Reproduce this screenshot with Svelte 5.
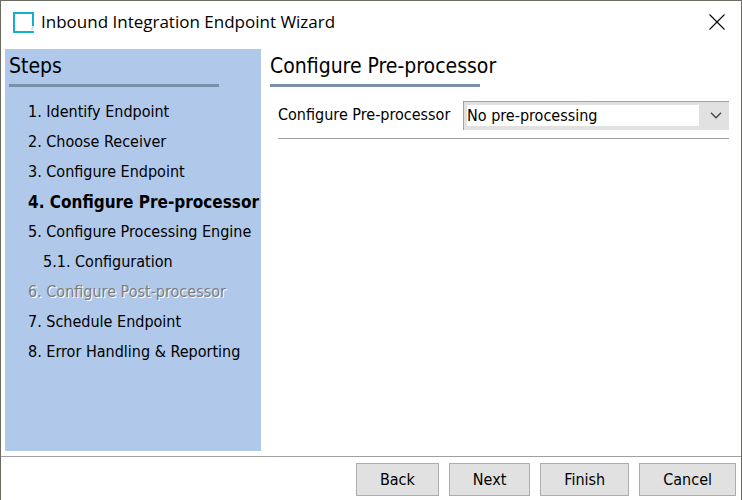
<script>
  const steps = [
    { label: '1. Identify Endpoint' },
    { label: '2. Choose Receiver' },
    { label: '3. Configure Endpoint' },
    { label: '4. Configure Pre-processor', current: true },
    { label: '5. Configure Processing Engine' },
    { label: '5.1. Configuration', sub: true },
    { label: '6. Configure Post-processor', disabled: true },
    { label: '7. Schedule Endpoint' },
    { label: '8. Error Handling & Reporting' }
  ];

  let processor = $state('none');
</script>

<main class="window">
  <header class="titlebar">
    <svg class="logo" width="21" height="21" viewBox="0 0 21 21" aria-hidden="true">
      <path d="M20 14V1H1v19h20" fill="none" stroke="#12b0cb" stroke-width="2" />
      <path d="M18 17h2M19 15h2" stroke="#7fd3e0" />
    </svg>
    <span class="title">Inbound Integration Endpoint Wizard</span>
    <button class="close" type="button" aria-label="Close">
      <svg width="16" height="16" viewBox="0 0 16 16" aria-hidden="true">
        <path d="M.5.5l15 15M15.500.5l-15 15" stroke="#000" stroke-width="1.100" />
      </svg>
    </button>
  </header>

  <div class="content">
    <nav class="steps">
      <h2>Steps</h2>
      <ol>
        {#each steps as step}
          <li
            class:current={step.current}
            class:sub={step.sub}
            class:disabled={step.disabled}
            aria-current={step.current ? 'step' : undefined}
          >{step.label}</li>
        {/each}
      </ol>
    </nav>

    <section class="panel">
      <h2>Configure Pre-processor</h2>
      <div class="field">
        <label for="processor">Configure Pre-processor</label>
        <div class="combo">
          <select id="processor" bind:value={processor}>
            <option value="none">No pre-processing</option>
          </select>
          <svg width="12" height="7" viewBox="0 0 12 7" aria-hidden="true">
            <path d="M1 .8l5 5 5-5" fill="none" stroke="#444" stroke-width="1.300" />
          </svg>
        </div>
      </div>
    </section>
  </div>

  <footer class="actions">
    <button type="button">Back</button>
    <button type="button">Next</button>
    <button type="button">Finish</button>
    <button type="button">Cancel</button>
  </footer>
</main>

<style>
  :global(body) {
    margin: 0;
    background: #fff;
  }

  .window {
    box-sizing: border-box;
    display: flex;
    flex-direction: column;
    min-height: 100vh;
    border: 1px solid #6c6b62;
    border-bottom: 0;
    background: #fff;
    color: #000;
    font: 16px/30px Tahoma, "DejaVu Sans Condensed", sans-serif;
  }

  .titlebar {
    display: flex;
    align-items: center;
    height: 42px;
    padding: 0 16px 6px 12px;
  }

  .title {
    flex: 1;
    margin-left: 7px;
    font: 17px/30px "Open Sans", sans-serif;
  }

  .close {
    display: flex;
    padding: 0;
    border: 0;
    background: none;
  }

  .content {
    flex: 1;
    display: flex;
    gap: 9px;
    padding: 0 12px 5px 4px;
  }

  h2 {
    box-sizing: border-box;
    width: 210px;
    margin: 0;
    border-bottom: 3px solid #7a90aa;
    font-size: 21px;
    font-weight: normal;
    line-height: 35px;
    white-space: nowrap;
  }

  .steps {
    box-sizing: border-box;
    width: 256px;
    padding-left: 4px;
    background: #b0c8ea;
  }

  ol {
    margin: 10px 0 0;
    padding-left: 19px;
    list-style: none;
    white-space: nowrap;
  }

  .current {
    font-size: 17px;
    font-weight: bold;
  }

  .sub {
    padding-left: 15px;
  }

  .disabled {
    color: #7d7d7d;
    text-shadow: 1px 1px #fff;
  }

  .panel {
    flex: 1;
  }

  .field {
    display: flex;
    align-items: center;
    gap: 8px;
    margin: 13px 0 0 8px;
    padding-bottom: 8px;
    border-bottom: 1px solid #a0a0a0;
  }

  label {
    min-width: 177px;
  }

  .combo {
    position: relative;
    flex: 1;
  }

  /* white text area on a grey box, the arrow sits in the grey part */
  select {
    appearance: none;
    display: block;
    width: 100%;
    height: 29px;
    padding: 0 34px 0 3px;
    border: 0 solid #a0a0a0;
    border-width: 1px 0 0 1px;
    border-radius: 0;
    background: linear-gradient(#fff, #fff) 3px 3px / calc(100% - 33px) 21px no-repeat #e1e1e1;
    color: #000;
    font: inherit;
    line-height: 28px;
  }

  .combo svg {
    position: absolute;
    top: 11px;
    right: 7px;
    pointer-events: none;
  }

  .actions {
    display: flex;
    justify-content: flex-end;
    gap: 10px;
    padding: 6px 5px 4px;
    border-top: 1px solid #a0a0a0;
  }

  .actions button {
    min-width: 81px;
    height: 33px;
    padding: 0 23px;
    border: 1px solid #adadad;
    background: #e1e1e1;
    color: #000;
    font: inherit;
  }
</style>
